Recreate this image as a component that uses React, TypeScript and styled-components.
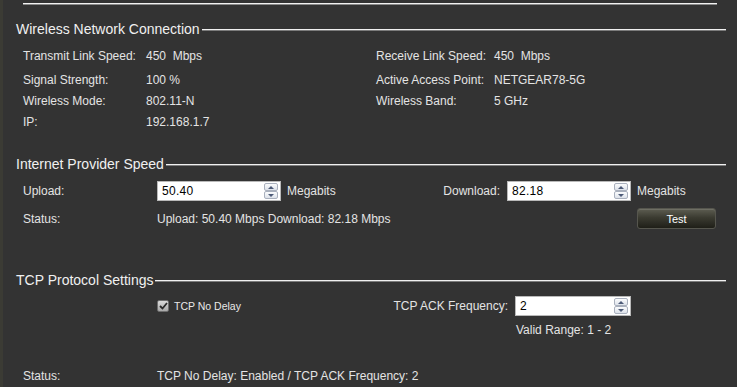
import React from "react";
import styled, { createGlobalStyle } from "styled-components";

const GlobalStyle = createGlobalStyle`
  html, body {
    margin: 0;
    padding: 0;
    background: #333333;
  }
  body {
    font-family: "Liberation Sans", Arial, sans-serif;
  }
`;

const Page = styled.div`
  width: 737px;
  height: 387px;
  box-sizing: border-box;
  border-left: 3px solid #3b3b34;
  padding: 3px 11px 0 13px;
  overflow: hidden;
  color: #e4e4e4;
  font-size: 12px;
  background: #333333;
`;

const TopRule = styled.div`
  margin: 0 9px 0 7px;
  border-top: 1px solid #f2f2f2;
  border-bottom: 1px solid #8a8a8a;
`;

const Section = styled.section<{ $top: number }>`
  margin-top: ${({ $top }) => $top}px;
`;

const TitleRow = styled.div`
  display: flex;
  align-items: center;
  height: 16px;
  font-size: 14px;
  color: #f0f0f0;
  white-space: nowrap;
`;

const TitleRule = styled.div`
  flex: 1;
  margin: 2px 0 0 2px;
  border-top: 1px solid #f0f0f0;
  border-bottom: 1px solid #7c7c7c;
`;

const InfoGrid = styled.div`
  display: grid;
  grid-template-columns: 123px 230px 118px 1fr;
  grid-template-rows: 24px 21px 21px 21px;
  align-items: start;
  line-height: 21px;
  padding-left: 7px;
  margin-top: 9px;
  white-space: pre;
`;

const FormGrid = styled.div<{ $cols: string; $rows: string; $gap: number; $top: number }>`
  display: grid;
  grid-template-columns: ${({ $cols }) => $cols};
  grid-template-rows: ${({ $rows }) => $rows};
  row-gap: ${({ $gap }) => $gap}px;
  align-items: center;
  padding-left: 7px;
  margin-top: ${({ $top }) => $top}px;
  white-space: nowrap;
`;

const StatusRow = styled.div`
  display: grid;
  grid-template-columns: 134px 1fr;
  height: 16px;
  align-items: center;
  padding-left: 7px;
  margin-top: 30px;
`;

const Cell = styled.span<{ $span?: string; $right?: boolean; $pad?: number }>`
  grid-column: ${({ $span }) => $span ?? "auto"};
  text-align: ${({ $right }) => ($right ? "right" : "left")};
  padding-left: ${({ $right, $pad }) => ($right ? 0 : $pad ?? 0)}px;
  padding-right: ${({ $right, $pad }) => ($right ? $pad ?? 0 : 0)}px;
`;

const Field = styled.div<{ $width: number }>`
  display: flex;
  align-items: center;
  width: ${({ $width }) => $width}px;
  height: 20px;
  box-sizing: border-box;
  border: 1px solid #b9b9b9;
  background: #ffffff;
  color: #000000;
  font-size: 12px;
`;

const FieldValue = styled.span`
  flex: 1;
  padding-left: 4px;
  letter-spacing: 0.3px;
`;

const Spinner = styled.div`
  display: flex;
  flex-direction: column;
  width: 14px;
  height: 16px;
  margin-right: 2px;
`;

const SpinHalf = styled.div<{ $dir: "up" | "down" }>`
  flex: 1;
  display: flex;
  align-items: center;
  justify-content: center;
  box-sizing: border-box;
  border: 1px solid #a9b0bd;
  border-radius: 2px;
  background: linear-gradient(#fbfcfd, #dde2ea);

  &::after {
    content: "";
    border-left: 3px solid transparent;
    border-right: 3px solid transparent;
    ${({ $dir }) =>
      $dir === "up" ? "border-bottom: 3px solid #4d5b78;" : "border-top: 3px solid #4d5b78;"}
  }
`;

const TestButton = styled.button`
  width: 79px;
  height: 21px;
  margin-left: 6px;
  padding: 0;
  border: 1px solid #56564e;
  border-radius: 3px;
  background: linear-gradient(180deg, #5d5d51 0%, #3b3b31 45%, #1f1f18 100%);
  box-shadow: inset 0 1px 0 rgba(255, 255, 255, 0.12);
  color: #ffffff;
  font-family: "Liberation Sans", Arial, sans-serif;
  font-size: 11px;
`;

const CheckRow = styled.label`
  display: flex;
  align-items: center;
  gap: 5px;
  font-size: 10.5px;
  color: #e8e8e8;
`;

const CheckBox = styled.span`
  display: flex;
  align-items: center;
  justify-content: center;
  width: 12px;
  height: 12px;
  box-sizing: border-box;
  border: 1px solid #6e6e6e;
  border-radius: 2px;
  background: linear-gradient(#dadada, #a9a9a9);
  margin-top: -1px;
`;

const SpinBox = ({ value, width }: { value: string; width: number }) => (
  <Field $width={width}>
    <FieldValue>{value}</FieldValue>
    <Spinner>
      <SpinHalf $dir="up" />
      <SpinHalf $dir="down" />
    </Spinner>
  </Field>
);

const SectionTitle = ({ children }: { children: React.ReactNode }) => (
  <TitleRow>
    {children}
    <TitleRule />
  </TitleRow>
);

export default function App() {
  return (
    <>
      <GlobalStyle />
      <Page>
        <TopRule />

        <Section $top={16}>
          <SectionTitle>Wireless Network Connection</SectionTitle>
          <InfoGrid>
            <span>Transmit Link Speed:</span>
            <span>450  Mbps</span>
            <span>Receive Link Speed:</span>
            <span>450  Mbps</span>
            <span>Signal Strength:</span>
            <span>100 %</span>
            <span>Active Access Point:</span>
            <span>NETGEAR78-5G</span>
            <span>Wireless Mode:</span>
            <span>802.11-N</span>
            <span>Wireless Band:</span>
            <span>5 GHz</span>
            <span>IP:</span>
            <span>192.168.1.7</span>
          </InfoGrid>
        </Section>

        <Section $top={23}>
          <SectionTitle>Internet Provider Speed</SectionTitle>
          <FormGrid $cols="134px 124px 156px 70px 124px 1fr" $rows="20px 21px" $gap={7} $top={9}>
            <Cell>Upload:</Cell>
            <SpinBox value="50.40" width={124} />
            <Cell $pad={6}>Megabits</Cell>
            <Cell $right $pad={7}>Download:</Cell>
            <SpinBox value="82.18" width={124} />
            <Cell $pad={6}>Megabits</Cell>
            <Cell>Status:</Cell>
            <Cell $span="2 / 6">Upload: 50.40 Mbps Download: 82.18 Mbps</Cell>
            <TestButton>Test</TestButton>
          </FormGrid>
        </Section>

        <Section $top={43}>
          <SectionTitle>TCP Protocol Settings</SectionTitle>
          <FormGrid $cols="134px 220px 138px 116px 1fr" $rows="20px 16px" $gap={6} $top={8}>
            <span />
            <CheckRow>
              <CheckBox>
                <svg width="9" height="8" viewBox="0 0 9 8">
                  <path d="M1 4 L3.5 6.5 L8 1" fill="none" stroke="#2a2a2a" strokeWidth="1.8" />
                </svg>
              </CheckBox>
              TCP No Delay
            </CheckRow>
            <Cell $right $pad={7}>TCP ACK Frequency:</Cell>
            <SpinBox value="2" width={116} />
            <span />
            <Cell $span="4 / 6" $pad={1}>Valid Range: 1 - 2</Cell>
          </FormGrid>
          <StatusRow>
            <span>Status:</span>
            <span>TCP No Delay: Enabled / TCP ACK Frequency: 2</span>
          </StatusRow>
        </Section>
      </Page>
    </>
  );
}
